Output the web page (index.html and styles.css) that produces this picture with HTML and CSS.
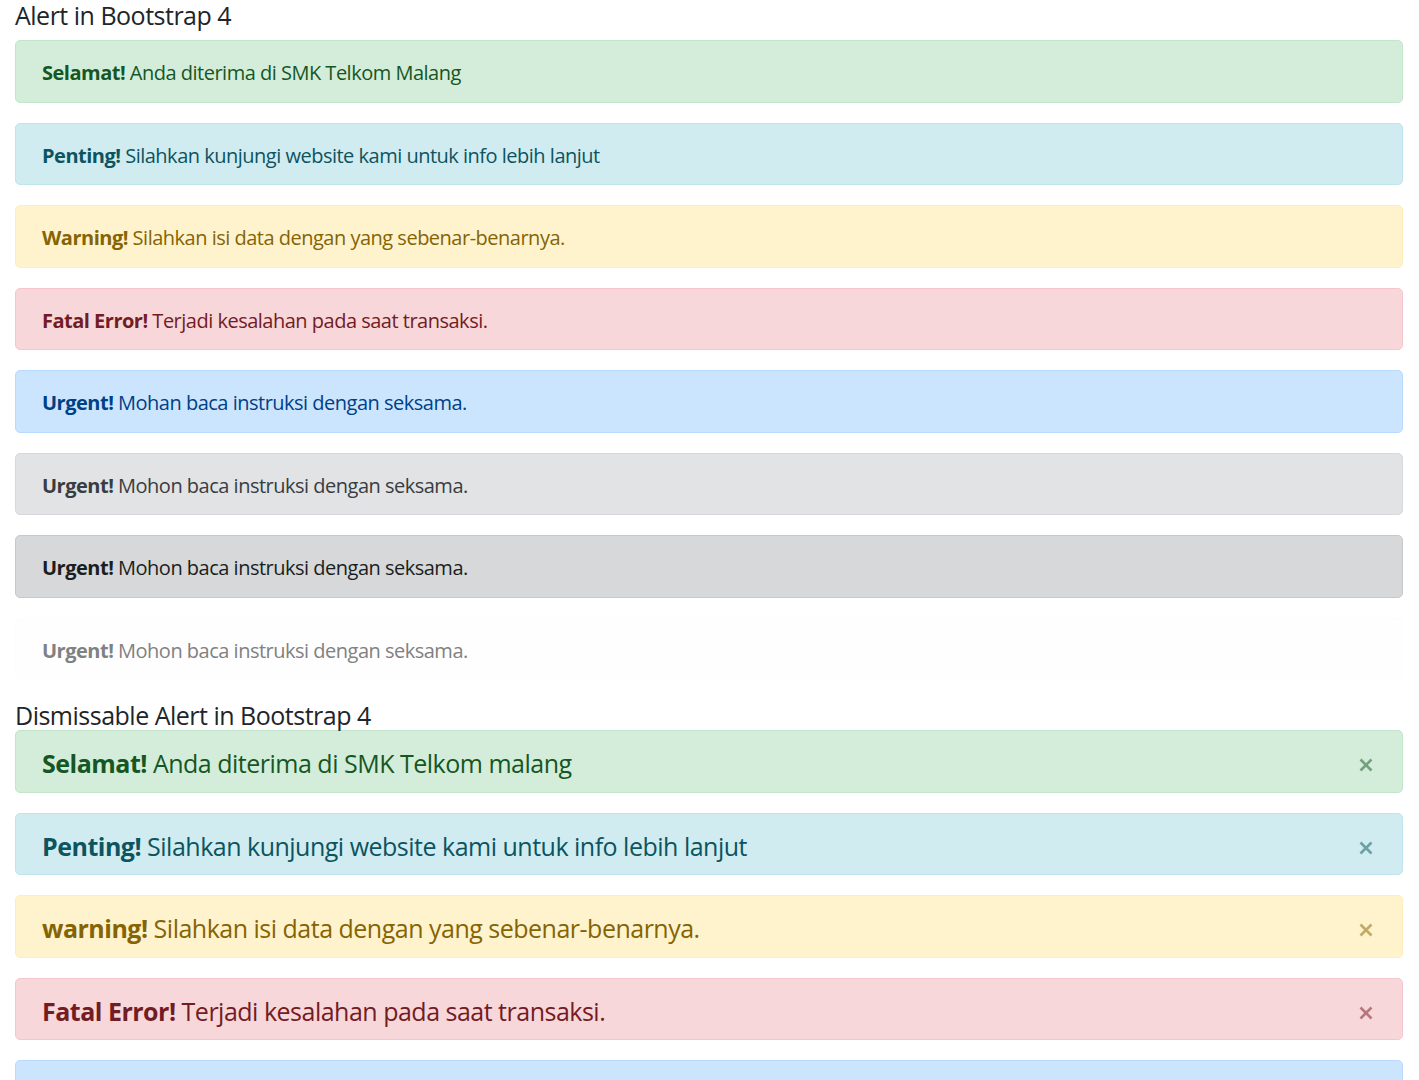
FILE: index.html
```html
<!DOCTYPE html>
<html lang="id">
<head>
<meta charset="utf-8">
<title>Alert in Bootstrap 4</title>
<link rel="stylesheet" href="styles.css">
</head>
<body>
<div class="container">
  <h4 class="title">Alert in Bootstrap 4</h4>
  <div class="alert alert-success"><strong>Selamat!</strong> Anda diterima di SMK Telkom Malang</div>
  <div class="alert alert-info"><strong>Penting!</strong> Silahkan kunjungi website kami untuk info lebih lanjut</div>
  <div class="alert alert-warning"><strong>Warning!</strong> Silahkan isi data dengan yang sebenar-benarnya.</div>
  <div class="alert alert-danger"><strong>Fatal Error!</strong> Terjadi kesalahan pada saat transaksi.</div>
  <div class="alert alert-primary"><strong>Urgent!</strong> Mohan baca instruksi dengan seksama.</div>
  <div class="alert alert-secondary"><strong>Urgent!</strong> Mohon baca instruksi dengan seksama.</div>
  <div class="alert alert-dark"><strong>Urgent!</strong> Mohon baca instruksi dengan seksama.</div>
  <div class="alert alert-light"><strong>Urgent!</strong> Mohon baca instruksi dengan seksama.</div>

  <h4 class="title title-flush">Dismissable Alert in Bootstrap 4</h4>
  <div class="alert alert-dismissible alert-success">
    <div class="alert-text"><strong>Selamat!</strong> Anda diterima di SMK Telkom malang</div>
    <button class="close" type="button" aria-label="Close"><svg viewBox="0 0 14 14" width="14" height="14"><path d="M1.5 1.5 L12.5 12.5 M12.5 1.5 L1.5 12.5"/></svg></button>
  </div>
  <div class="alert alert-dismissible alert-info">
    <div class="alert-text"><strong>Penting!</strong> Silahkan kunjungi website kami untuk info lebih lanjut</div>
    <button class="close" type="button" aria-label="Close"><svg viewBox="0 0 14 14" width="14" height="14"><path d="M1.5 1.5 L12.5 12.5 M12.5 1.5 L1.5 12.5"/></svg></button>
  </div>
  <div class="alert alert-dismissible alert-warning">
    <div class="alert-text"><strong>warning!</strong> Silahkan isi data dengan yang sebenar-benarnya.</div>
    <button class="close" type="button" aria-label="Close"><svg viewBox="0 0 14 14" width="14" height="14"><path d="M1.5 1.5 L12.5 12.5 M12.5 1.5 L1.5 12.5"/></svg></button>
  </div>
  <div class="alert alert-dismissible alert-danger">
    <div class="alert-text"><strong>Fatal Error!</strong> Terjadi kesalahan pada saat transaksi.</div>
    <button class="close" type="button" aria-label="Close"><svg viewBox="0 0 14 14" width="14" height="14"><path d="M1.5 1.5 L12.5 12.5 M12.5 1.5 L1.5 12.5"/></svg></button>
  </div>
  <div class="alert alert-dismissible alert-primary">
    <div class="alert-text"><strong>Urgent!</strong> Mohon baca instruksi dengan seksama.</div>
    <button class="close" type="button" aria-label="Close"><svg viewBox="0 0 14 14" width="14" height="14"><path d="M1.5 1.5 L12.5 12.5 M12.5 1.5 L1.5 12.5"/></svg></button>
  </div>
</div>
</body>
</html>
```
FILE: styles.css
```css
html, body {
  margin: 0;
  padding: 0;
  background: #fff;
}
body {
  font-family: "Open Sans", "Noto Sans", "Liberation Sans", sans-serif;
  font-size: 20px;
  line-height: 30px;
  letter-spacing: -0.025em;
  color: #212529;
}
.container {
  padding: 0 16px 0 15px;
}
.title {
  margin: 0 0 10px;
  font-size: 25px;
  line-height: 30px;
  font-weight: 400;
  color: #212529;
}
.title-flush {
  margin-bottom: 0;
}
.alert {
  border: 1px solid transparent;
  border-radius: 5px;
  padding: 17.25px 25px 13.25px 26px;
  margin-bottom: 20px;
}
.alert strong {
  font-weight: 700;
}
.alert-dismissible {
  display: flex;
  align-items: flex-start;
  font-size: 25px;
  padding-top: 17.25px;
  padding-bottom: 13.25px;
  padding-right: 29px;
}
.alert-text {
  flex: 1;
}
.close {
  flex: none;
  margin: 10px 0 0;
  padding: 0;
  border: 0;
  background: none;
  color: inherit;
  opacity: .5;
  width: 14px;
  height: 14px;
  display: block;
  cursor: pointer;
}
.close svg {
  display: block;
  fill: none;
  stroke: currentColor;
  stroke-width: 2.6;
}
.alert-success { color: #155724; background: #d4edda; border-color: #c3e6cb; }
.alert-info { color: #0c5460; background: #d1ecf1; border-color: #bee5eb; }
.alert-warning { color: #856404; background: #fff3cd; border-color: #ffeeba; }
.alert-danger { color: #721c24; background: #f8d7da; border-color: #f5c6cb; }
.alert-primary { color: #004085; background: #cce5ff; border-color: #b8daff; }
.alert-secondary { color: #383d41; background: #e2e3e5; border-color: #d6d8db; }
.alert-dark { color: #1b1e21; background: #d6d8d9; border-color: #c6c8ca; }
.alert-light { color: #818182; background: #fefefe; border-color: #fdfdfe; }
```
